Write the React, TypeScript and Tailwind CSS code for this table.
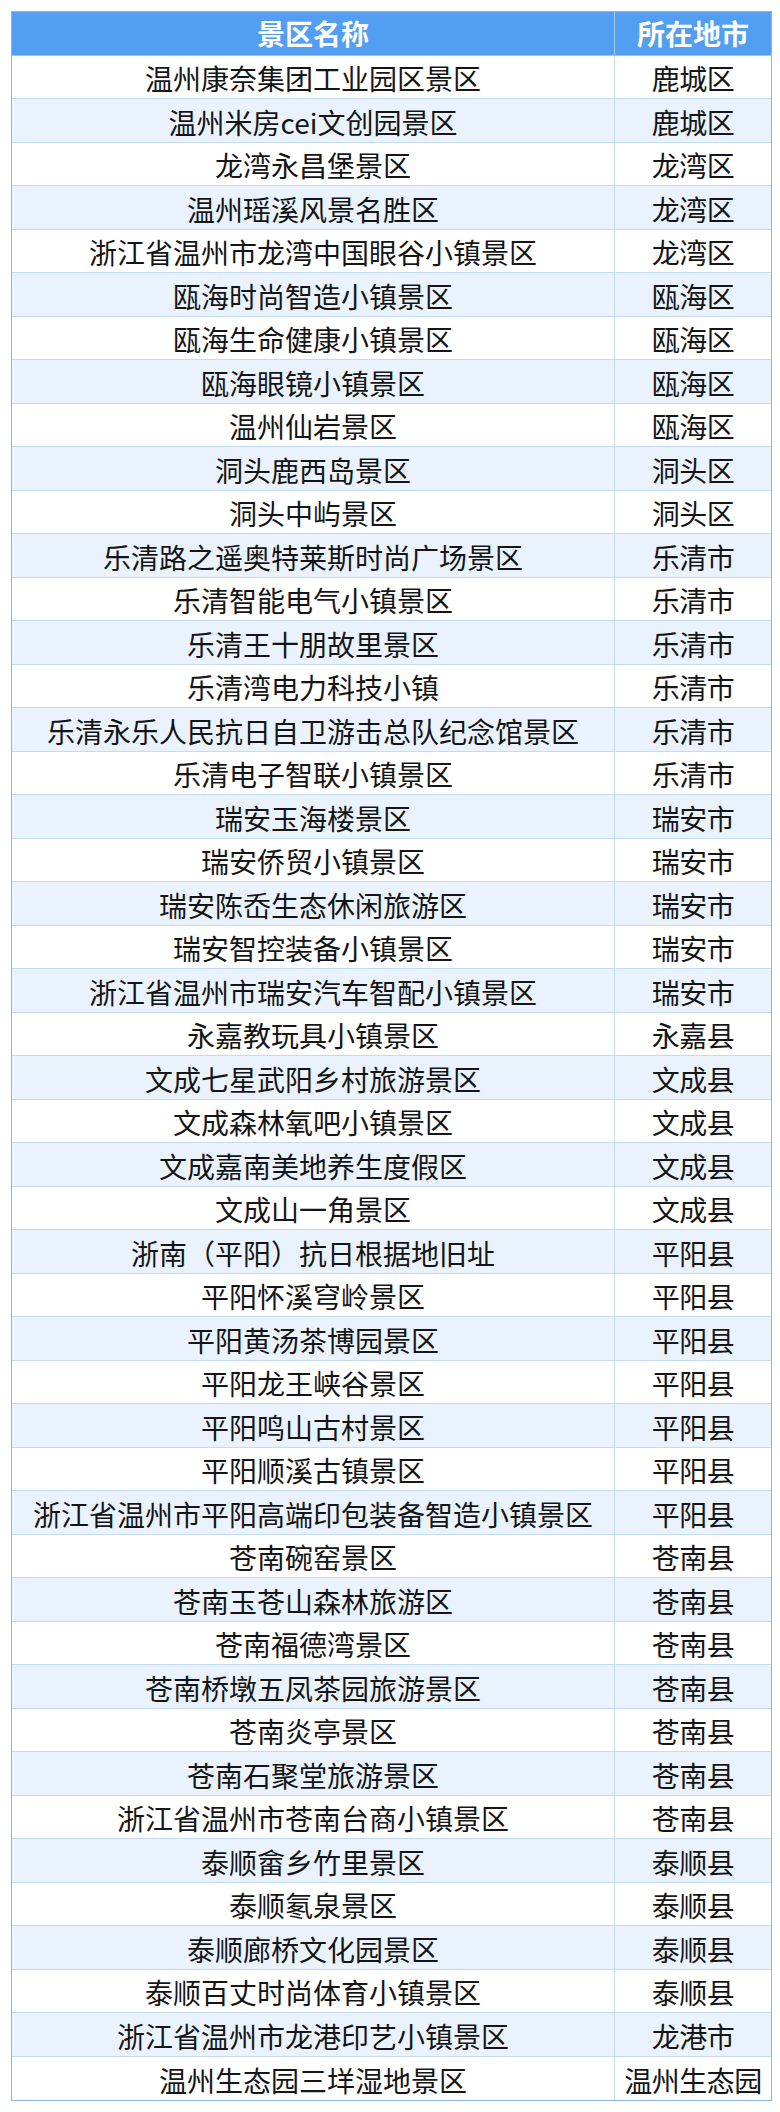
import React from "react";

const rows: [string, string][] = [
  ["温州康奈集团工业园区景区", "鹿城区"],
  ["温州米房cei文创园景区", "鹿城区"],
  ["龙湾永昌堡景区", "龙湾区"],
  ["温州瑶溪风景名胜区", "龙湾区"],
  ["浙江省温州市龙湾中国眼谷小镇景区", "龙湾区"],
  ["瓯海时尚智造小镇景区", "瓯海区"],
  ["瓯海生命健康小镇景区", "瓯海区"],
  ["瓯海眼镜小镇景区", "瓯海区"],
  ["温州仙岩景区", "瓯海区"],
  ["洞头鹿西岛景区", "洞头区"],
  ["洞头中屿景区", "洞头区"],
  ["乐清路之遥奥特莱斯时尚广场景区", "乐清市"],
  ["乐清智能电气小镇景区", "乐清市"],
  ["乐清王十朋故里景区", "乐清市"],
  ["乐清湾电力科技小镇", "乐清市"],
  ["乐清永乐人民抗日自卫游击总队纪念馆景区", "乐清市"],
  ["乐清电子智联小镇景区", "乐清市"],
  ["瑞安玉海楼景区", "瑞安市"],
  ["瑞安侨贸小镇景区", "瑞安市"],
  ["瑞安陈岙生态休闲旅游区", "瑞安市"],
  ["瑞安智控装备小镇景区", "瑞安市"],
  ["浙江省温州市瑞安汽车智配小镇景区", "瑞安市"],
  ["永嘉教玩具小镇景区", "永嘉县"],
  ["文成七星武阳乡村旅游景区", "文成县"],
  ["文成森林氧吧小镇景区", "文成县"],
  ["文成嘉南美地养生度假区", "文成县"],
  ["文成山一角景区", "文成县"],
  ["浙南（平阳）抗日根据地旧址", "平阳县"],
  ["平阳怀溪穹岭景区", "平阳县"],
  ["平阳黄汤茶博园景区", "平阳县"],
  ["平阳龙王峡谷景区", "平阳县"],
  ["平阳鸣山古村景区", "平阳县"],
  ["平阳顺溪古镇景区", "平阳县"],
  ["浙江省温州市平阳高端印包装备智造小镇景区", "平阳县"],
  ["苍南碗窑景区", "苍南县"],
  ["苍南玉苍山森林旅游区", "苍南县"],
  ["苍南福德湾景区", "苍南县"],
  ["苍南桥墩五凤茶园旅游景区", "苍南县"],
  ["苍南炎亭景区", "苍南县"],
  ["苍南石聚堂旅游景区", "苍南县"],
  ["浙江省温州市苍南台商小镇景区", "苍南县"],
  ["泰顺畲乡竹里景区", "泰顺县"],
  ["泰顺氡泉景区", "泰顺县"],
  ["泰顺廊桥文化园景区", "泰顺县"],
  ["泰顺百丈时尚体育小镇景区", "泰顺县"],
  ["浙江省温州市龙港印艺小镇景区", "龙港市"],
  ["温州生态园三垟湿地景区", "温州生态园"],
];

export default function App() {
  return (
    <div className="w-[780px] min-h-[2112px] bg-white pt-[11px] pl-[11px] font-['Noto_Sans_CJK_SC','Noto_Sans',sans-serif]">
      <div className="w-[761px] border border-[#8fb5d8]">
        <div className="flex h-[43.5px] bg-[#529ef2] border-b border-[#9cc6f2] text-white font-bold text-[28px] leading-none">
          <div className="w-[603px] flex items-center justify-center border-r border-[#a9cdf3]">景区名称</div>
          <div className="flex-1 flex items-center justify-center">所在地市</div>
        </div>
        {rows.map(([name, city], i) => (
          <div
            key={i}
            className={`flex h-[43.5px] text-[28px] leading-none text-[#151515] ${i === rows.length - 1 ? "" : "border-b border-[#c3dbf1]"} ${i % 2 === 1 ? "bg-[#eaf3fd]" : "bg-white"}`}
          >
            <div className="w-[603px] flex items-center justify-center pt-[3px] border-r border-[#c3dbf1] whitespace-nowrap">{name}</div>
            <div className="flex-1 flex items-center justify-center pt-[3px] whitespace-nowrap tracking-[-0.5px]">{city}</div>
          </div>
        ))}
      </div>
    </div>
  );
}
